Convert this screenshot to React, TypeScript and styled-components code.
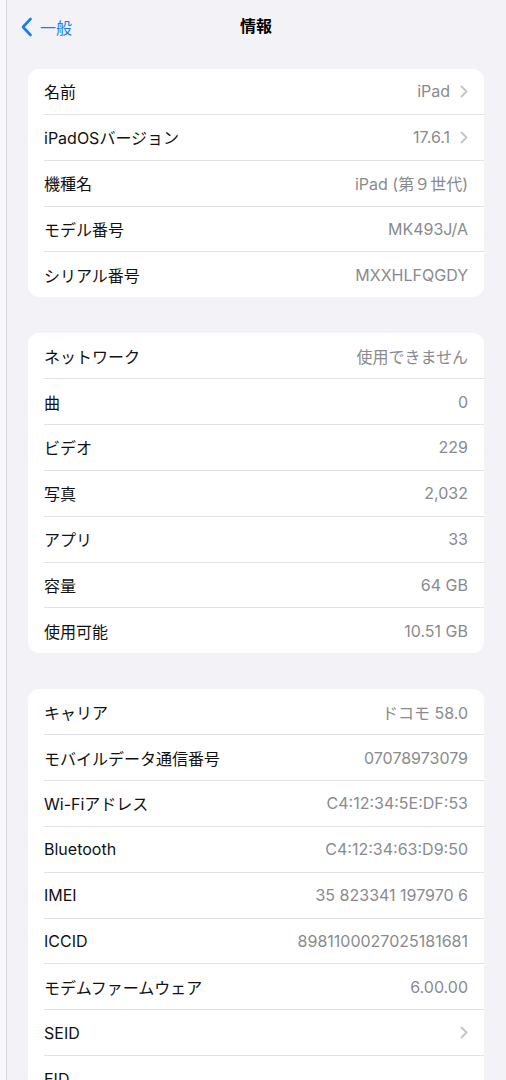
import React from 'react'
import styled, { createGlobalStyle } from 'styled-components'

type Item = { label: string; value?: string; link?: boolean }

const groups: Item[][] = [
  [
    { label: '名前', value: 'iPad', link: true },
    { label: 'iPadOSバージョン', value: '17.6.1', link: true },
    { label: '機種名', value: 'iPad (第９世代)' },
    { label: 'モデル番号', value: 'MK493J/A' },
    { label: 'シリアル番号', value: 'MXXHLFQGDY' },
  ],
  [
    { label: 'ネットワーク', value: '使用できません' },
    { label: '曲', value: '0' },
    { label: 'ビデオ', value: '229' },
    { label: '写真', value: '2,032' },
    { label: 'アプリ', value: '33' },
    { label: '容量', value: '64 GB' },
    { label: '使用可能', value: '10.51 GB' },
  ],
  [
    { label: 'キャリア', value: 'ドコモ 58.0' },
    { label: 'モバイルデータ通信番号', value: '07078973079' },
    { label: 'Wi-Fiアドレス', value: 'C4:12:34:5E:DF:53' },
    { label: 'Bluetooth', value: 'C4:12:34:63:D9:50' },
    { label: 'IMEI', value: '35 823341 197970 6' },
    { label: 'ICCID', value: '8981100027025181681' },
    { label: 'モデムファームウェア', value: '6.00.00' },
    { label: 'SEID', link: true },
    { label: 'EID' },
  ],
]

export default function App() {
  return (
    <>
      <GlobalStyle />
      <Screen>
        <SideEdge />
        <Main>
          <NavBar>
            <BackButton>
              <svg width="13" height="20" viewBox="0 0 13 20">
                <path d="M10.5 2 L3 10 L10.5 18" fill="none" stroke="#1a7cf5" strokeWidth="2.6" strokeLinecap="round" strokeLinejoin="round" />
              </svg>
              <BackText>一般</BackText>
            </BackButton>
            <Title>情報</Title>
          </NavBar>
          <Groups>
            {groups.map((g, gi) => (
              <Card key={gi}>
                {g.map((item) => (
                  <Row key={item.label}>
                    <RowInner>
                      <Label>{item.label}</Label>
                      <Value>
                        {item.value}
                        {item.link && (
                          <svg width="8" height="13" viewBox="0 0 8 13">
                            <path d="M1.5 1.5 L6.5 6.5 L1.5 11.5" fill="none" stroke="#c4c4c7" strokeWidth="1.8" strokeLinecap="round" strokeLinejoin="round" />
                          </svg>
                        )}
                      </Value>
                    </RowInner>
                  </Row>
                ))}
              </Card>
            ))}
          </Groups>
        </Main>
      </Screen>
    </>
  )
}

const GlobalStyle = createGlobalStyle`
  html, body {
    margin: 0;
    padding: 0;
    background: #f2f2f7;
    font-family: Inter, "Noto Sans CJK JP", sans-serif;
    -webkit-font-smoothing: antialiased;
  }
`

const Screen = styled.div`
  display: flex;
  height: 1080px;
  overflow: hidden;
  background: #f2f2f7;
`

const SideEdge = styled.div`
  width: 6px;
  flex-shrink: 0;
  background: #f8f8fa;
  border-right: 1px solid #d6d6db;
`

const Main = styled.div`
  flex: 1;
  padding: 0 22px 0 21px;
`

const NavBar = styled.div`
  position: relative;
  height: 49px;
  display: flex;
  align-items: center;
  justify-content: center;
`

const BackButton = styled.div`
  position: absolute;
  left: -8px;
  top: 15px;
  display: flex;
  align-items: center;
  gap: 7px;
`

const BackText = styled.span`
  color: #1a7cf5;
  font-size: 16px;
`

const Title = styled.div`
  font-size: 16px;
  font-weight: 700;
  color: #000;
`

const Groups = styled.div`
  display: flex;
  flex-direction: column;
  gap: 36px;
  margin-top: 20px;
`

const Card = styled.div`
  background: #fff;
  border-radius: 11px;
  overflow: hidden;
`

const Row = styled.div`
  padding-left: 16px;
`

const RowInner = styled.div`
  height: 44.86px;
  display: flex;
  align-items: center;
  justify-content: space-between;
  padding-right: 16px;
  border-bottom: 1px solid #e2e2e6;

  ${Row}:last-child & {
    border-bottom: none;
  }
`

const Label = styled.span`
  font-size: 16px;
  color: #111;
`

const Value = styled.span`
  display: flex;
  align-items: center;
  gap: 10px;
  font-size: 16px;
  color: #8a8a8e;
`
